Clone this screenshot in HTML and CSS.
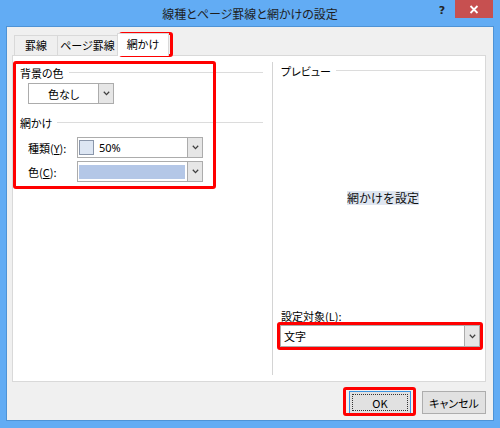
FILE: index.html
```html
<!DOCTYPE html>
<html lang="ja">
<head>
<meta charset="utf-8">
<title>線種とページ罫線と網かけの設定</title>
<link rel="stylesheet" href="styles.css">
</head>
<body>
<div class="window">
  <div class="titlebar">
    <div class="tb-spacer"></div>
    <div class="title">線種とページ罫線と網かけの設定</div>
    <div class="tb-controls">
      <span class="help">?</span>
      <span class="close"><svg width="10" height="9" viewBox="0 0 10 9"><path d="M1.5 1 L8.5 8 M8.5 1 L1.5 8" stroke="#fff" stroke-width="1.8" fill="none"/></svg></span>
    </div>
  </div>
  <div class="client">
    <div class="tabs">
      <div class="tab t1">罫線</div>
      <div class="tab t2">ページ罫線</div>
      <div class="tab t3 selected">網かけ</div>
    </div>
    <div class="panel">
      <div class="col-left">
        <div class="group-head"><span>背景の色</span><i class="rule"></i></div>
        <div class="combo combo-bg">
          <div class="combo-text centered">色なし</div>
          <div class="combo-btn"><svg width="7" height="5" viewBox="0 0 7 5"><polyline points="0.8,0.8 3.5,3.6 6.2,0.8" fill="none" stroke="#404040" stroke-width="1.3"/></svg></div>
        </div>
        <div class="group-head gh2"><span>網かけ</span><i class="rule"></i></div>
        <div class="field-row r1">
          <span class="field-label">種類(<u>Y</u>):</span>
          <div class="combo combo-field">
            <div class="combo-text"><span class="swatch"></span><span class="pct">50%</span></div>
            <div class="combo-btn"><svg width="7" height="5" viewBox="0 0 7 5"><polyline points="0.8,0.8 3.5,3.6 6.2,0.8" fill="none" stroke="#404040" stroke-width="1.3"/></svg></div>
          </div>
        </div>
        <div class="field-row r2">
          <span class="field-label">色(<u>C</u>):</span>
          <div class="combo combo-field">
            <div class="combo-text"><span class="colorbar"></span></div>
            <div class="combo-btn"><svg width="7" height="5" viewBox="0 0 7 5"><polyline points="0.8,0.8 3.5,3.6 6.2,0.8" fill="none" stroke="#404040" stroke-width="1.3"/></svg></div>
          </div>
        </div>
      </div>
      <div class="vsep"></div>
      <div class="col-right">
        <div class="group-head"><span>プレビュー</span><i class="rule"></i></div>
        <div class="preview"><span class="preview-text">網かけを設定</span></div>
        <div class="target-label">設定対象(<u>L</u>):</div>
        <div class="combo combo-target">
          <div class="combo-text">文字</div>
          <div class="combo-btn"><svg width="7" height="5" viewBox="0 0 7 5"><polyline points="0.8,0.8 3.5,3.6 6.2,0.8" fill="none" stroke="#404040" stroke-width="1.3"/></svg></div>
        </div>
      </div>
    </div>
    <div class="footer">
      <button class="btn btn-ok"><span class="focus">OK</span></button>
      <button class="btn btn-cancel">キャンセル</button>
    </div>
    <div class="mark mark-tab"></div>
    <div class="mark mark-left"></div>
    <div class="mark mark-target"></div>
    <div class="mark mark-ok"></div>
  </div>
</div>
</body>
</html>
```
FILE: styles.css
```css
html, body {
  margin: 0;
  padding: 0;
}
body {
  font-family: "Noto Sans CJK JP", "Noto Sans", sans-serif;
  font-feature-settings: "palt";
  font-size: 11px;
  color: #000;
}
.window {
  width: 500px;
  height: 428px;
  box-sizing: border-box;
  background: #62acf4;
  padding: 0 6px 7px 6px;
  display: flex;
  flex-direction: column;
}
.titlebar {
  height: 26px;
  display: flex;
  flex-shrink: 0;
}
.tb-spacer {
  width: 58px;
}
.title {
  flex: 1;
  text-align: center;
  font-size: 12px;
  line-height: 16px;
  padding-top: 6px;
  color: #1e1e1e;
}
.tb-controls {
  width: 58px;
  display: flex;
  align-items: flex-start;
}
.help {
  width: 12px;
  text-align: center;
  font-family: "DejaVu Sans", sans-serif;
  font-weight: bold;
  font-size: 11px;
  line-height: 16px;
  padding-top: 3px;
  color: #222;
  margin-right: 7px;
}
.close {
  width: 38px;
  height: 18px;
  background: #c75050;
  display: flex;
  align-items: center;
  justify-content: center;
  margin-right: 1px;
}
.client {
  position: relative;
  height: 395px;
  box-sizing: border-box;
  border: 1px solid #4e93d6;
  background: #f0f0f0;
  padding: 6px 7px 0 5px;
}
.tabs {
  display: flex;
  align-items: flex-end;
  height: 22px;
  margin-left: 2px;
}
.tab {
  height: 20px;
  box-sizing: border-box;
  border: 1px solid #d9d9d9;
  border-bottom: none;
  background: #efefef;
  text-align: center;
  line-height: 18px;
  font-size: 11px;
}
.t1 { width: 44px; }
.t2 { width: 61px; margin-left: -1px; }
.t3 { width: 52px; margin-left: -1px; }
.tab.selected {
  height: 23px;
  margin-bottom: -1px;
  background: #fff;
  position: relative;
  z-index: 1;
  line-height: 21px;
}
.panel {
  height: 327px;
  box-sizing: border-box;
  border: 1px solid #d9d9d9;
  background: #fff;
  display: flex;
}
.col-left {
  width: 250px;
  box-sizing: border-box;
  padding: 10px 0 0 7px;
  flex-shrink: 0;
}
.group-head {
  display: flex;
  align-items: center;
  height: 14px;
  line-height: 14px;
}
.group-head .rule {
  flex: 1;
  height: 1px;
  background: #dcdcdc;
  margin-left: 5px;
  margin-top: -1px;
}
.gh2 {
  margin-top: 12px;
}
.combo {
  display: flex;
  box-sizing: border-box;
  border: 1px solid #acacac;
  background: #fff;
}
.combo-text {
  flex: 1;
  display: flex;
  align-items: center;
  padding-left: 3px;
  overflow: hidden;
}
.combo-text.centered {
  justify-content: center;
  padding-left: 0;
}
.combo-btn {
  width: 14px;
  flex-shrink: 0;
  background: #e6e6e6;
  border-left: 1px solid #acacac;
  display: flex;
  align-items: center;
  justify-content: center;
}
.combo-bg {
  width: 86px;
  height: 21px;
  margin: 3px 0 0 8px;
}
.field-row {
  display: flex;
  align-items: center;
  height: 21px;
}
.r1 { margin-top: 7px; }
.r2 { margin-top: 3px; }
.field-label {
  width: 49px;
  margin-left: 8px;
  flex-shrink: 0;
}
.combo-field {
  width: 126px;
  height: 21px;
}
.combo-field .combo-text {
  padding-left: 1px;
}
.swatch {
  width: 13px;
  height: 13px;
  border: 1px solid #8a96aa;
  background: #dde6f3;
  flex-shrink: 0;
}
.pct {
  margin-left: 5px;
  font-family: "Noto Sans", sans-serif;
  font-size: 11px;
}
.colorbar {
  flex: 1;
  height: 14px;
  background: #b4c7e7;
  margin-right: 2px;
}
.vsep {
  width: 1px;
  background: #d4d4d4;
  margin: 6px 0 6px 9px;
  flex-shrink: 0;
}
.col-right {
  flex: 1;
  display: flex;
  flex-direction: column;
  padding: 8px 5px 0 8px;
}
.preview {
  flex: 1;
  display: flex;
  align-items: center;
  justify-content: center;
  padding: 9px 0 0 5px;
}
.preview-text {
  font-size: 12px;
  font-feature-settings: normal;
  line-height: 14px;
  background: #dfe6f1;
  color: #111;
}
.target-label {
  line-height: 14px;
}
.combo-target {
  width: 200px;
  height: 22px;
  margin: 2px 0 34px -1px;
}
.footer {
  display: flex;
  justify-content: flex-end;
  gap: 11px;
  margin-top: 9px;
}
.btn {
  height: 23px;
  box-sizing: border-box;
  border: 1px solid #adadad;
  background: #e1e1e1;
  font-family: inherit;
  font-feature-settings: "palt";
  font-size: 11px;
  color: #000;
  padding: 0;
  margin: 0;
}
.btn-ok {
  width: 62px;
  border-color: #3c93e0;
  padding: 2px;
  display: flex;
}
.btn-ok .focus {
  flex: 1;
  border: 1px dotted #333;
  display: flex;
  align-items: center;
  justify-content: center;
}
.btn-cancel {
  width: 64px;
}
.mark {
  position: absolute;
  box-sizing: border-box;
  border: 3px solid #f00;
  border-radius: 3px;
  pointer-events: none;
}
.mark-tab { left: 112px; top: 5px; width: 54px; height: 25px; }
.mark-left { left: 6px; top: 34px; width: 203px; height: 128px; }
.mark-target { left: 270px; top: 295px; width: 206px; height: 28px; }
.mark-ok { left: 336px; top: 360px; width: 73px; height: 29px; }
```
